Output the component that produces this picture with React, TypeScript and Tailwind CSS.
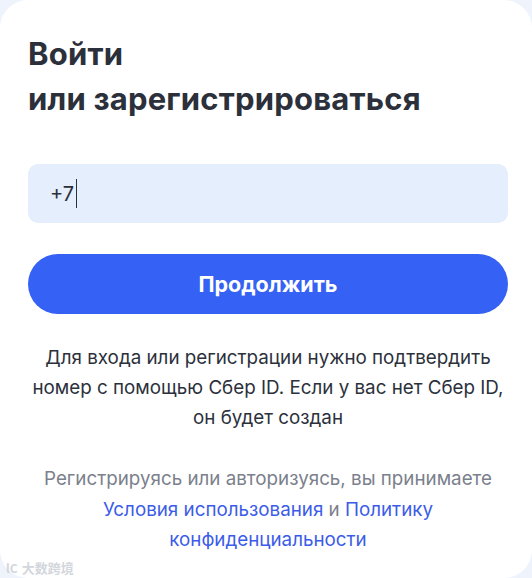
export default function App() {
  return (
    <div className="min-h-[578px] w-[532px] bg-[#eef3fc] font-['Inter','Noto_Sans',sans-serif]">
      <div className="relative flex min-h-[578px] flex-col rounded-[28px] bg-white pl-7 pr-6 pt-[31px]">
        <h1 className="text-[31px] font-bold leading-[45px] tracking-[0.2px] text-[#2b303b]">
          Войти
          <br />
          или зарегистрироваться
        </h1>

        <div className="mt-[43px] flex h-[59px] items-center rounded-[10px] bg-[#e5eefd] px-[22px]">
          <span className="text-[20px] text-[#2b303b]">+7</span>
          <span className="ml-[2px] h-[29px] w-px bg-[#2b303b]" />
        </div>

        <button className="mt-[31px] h-[60px] w-full rounded-full bg-[#3561f5] text-[21.5px] font-bold text-white">
          Продолжить
        </button>

        <p className="mt-[29px] text-center text-[18.8px] leading-[30px] text-[#2b303b]">
          Для входа или регистрации нужно подтвердить
          <br />
          номер с помощью Сбер ID. Если у вас нет Сбер ID,
          <br />
          он будет создан
        </p>

        <p className="mt-[31px] text-center text-[18.8px] leading-[30.5px] text-[#7b808c]">
          Регистрируясь или авторизуясь, вы принимаете
          <br />
          <span className="text-[#3b5ce8]">Условия использования</span> и{" "}
          <span className="text-[#3b5ce8]">Политику</span>
          <br />
          <span className="text-[#3b5ce8]">конфиденциальности</span>
        </p>

        <div className="absolute bottom-[4px] left-[6px] flex items-center gap-[4px] text-[13px] leading-none text-[#d3d6dc] font-['Noto_Sans_CJK_SC',sans-serif]">
          <span className="text-[12px] font-bold">lC</span>
          <span className="font-bold">大数跨境</span>
        </div>
      </div>
    </div>
  );
}
